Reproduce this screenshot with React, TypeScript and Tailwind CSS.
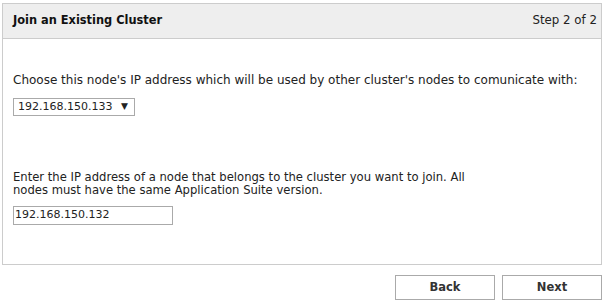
export default function App() {
  return (
    <div className="w-[603px] h-[301px] bg-white pt-[3px] pl-[2px] text-[12px] text-[#222] font-['Verdana','DejaVu_Sans',sans-serif]">
      <div className="w-[600px] border border-[#ccc] h-[262px]">
        <div className="h-[35px] bg-[#eee] border-b border-[#ccc] flex items-center justify-between pl-[10px] pr-[4px]">
          <span className="font-bold text-[11.4px] text-[#111]">Join an Existing Cluster</span>
          <span className="text-[11.8px]">Step 2 of 2</span>
        </div>
        <div className="px-[10px]">
          <p className="mt-[35px] leading-[13px]">
            Choose this node's IP address which will be used by other cluster's nodes to comunicate with:
          </p>
          <div className="mt-[11px] w-[122px] h-[18px] border border-[#aaa] flex items-center justify-between pl-[4px] pr-[6px] text-[11px]">
            <span>192.168.150.133</span>
            <span className="text-[9px]">▼</span>
          </div>
          <p className="mt-[55px] leading-[13px] text-[11.6px]">
            Enter the IP address of a node that belongs to the cluster you want to join. All
            <br />
            nodes must have the same Application Suite version.
          </p>
          <div className="mt-[9px] w-[160px] h-[19px] border border-[#aaa] flex items-center pl-[1px] text-[11px]">
            192.168.150.132
          </div>
        </div>
      </div>
      <div className="w-[600px] flex justify-end gap-[7px] mt-[10px]">
        <button className="w-[100px] h-[25px] border border-[#aaa] bg-white font-bold text-[11.5px] text-[#333]">Back</button>
        <button className="w-[100px] h-[25px] border border-[#aaa] bg-white font-bold text-[11.5px] text-[#333]">Next</button>
      </div>
    </div>
  );
}
